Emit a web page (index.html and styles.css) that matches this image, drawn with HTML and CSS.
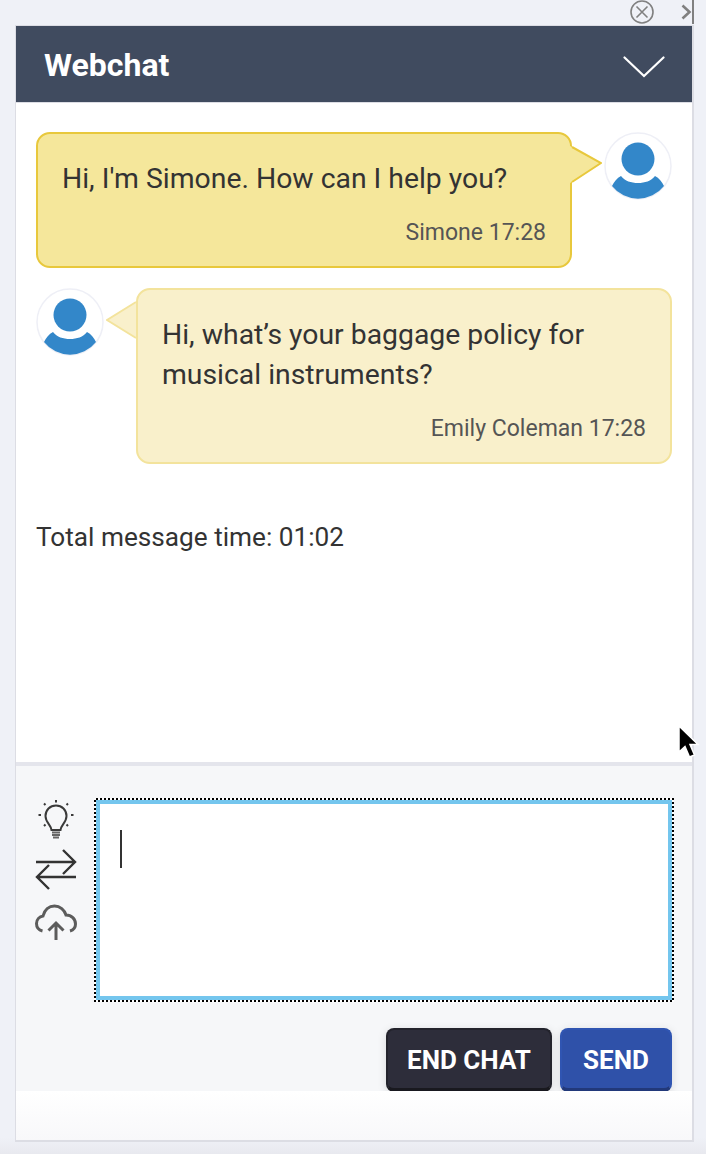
FILE: index.html
```html
<!DOCTYPE html>
<html lang="en">
<head>
    <meta charset="UTF-8">
    <title>Webchat</title>
    <link rel="stylesheet" href="styles.css">
</head>
<body>

    <div class="topbar">
        <svg class="close-icon" width="24" height="24" viewBox="0 0 24 24" fill="none" stroke="#808080" stroke-width="1.6">
            <circle cx="12" cy="12" r="11"/>
            <path d="M6.500 6.500 17.500 17.500M17.500 6.500 6.500 17.500"/>
        </svg>
        <svg class="more-icon" width="11" height="16" viewBox="0 0 11 16" fill="none" stroke="#808080" stroke-width="2.6">
            <path d="M1.500 1.500 8.500 8 1.500 14.500"/>
        </svg>
        <div class="topbar-edge"></div>
    </div>

    <div class="panel">
        <div class="header">
            <h2>Webchat</h2>
            <svg width="42" height="22" viewBox="0 0 42 22" fill="none" stroke="#fff" stroke-width="2.2" stroke-linecap="round">
                <path d="M1.500 1.500 21 20 40.500 1.500"/>
            </svg>
        </div>

        <div class="messages">
            <div class="msg msg-agent">
                <div class="bubble">
                    <p>Hi, I'm Simone. How can I help you?</p>
                    <div class="meta">Simone 17:28</div>
                </div>
                <svg class="tail" width="32" height="56" viewBox="0 0 32 56">
                    <path d="M0 14 31 31 0 51Z" fill="#f5e79b"/>
                    <path d="M2 15 31 31 2 50" fill="none" stroke="#e8c83c" stroke-width="2"/>
                </svg>
                <svg class="avatar" width="68" height="68" viewBox="0 0 68 68">
                    <circle cx="34" cy="34" r="33" fill="#fff" stroke="#eeeff6" stroke-width="1.500"/>
                    <g class="avatar-figure">
                        <circle cx="34" cy="27" r="16.500" fill="#3387c9"/>
                        <path d="M17 44C21 49 27 51 34 51 41 51 47 49 51 44 55 46 58 50 60 54A33 33 0 0 1 8 54C10 50 13 46 17 44Z" fill="#3387c9"/>
                    </g>
                </svg>
            </div>

            <div class="msg msg-user">
                <svg class="avatar" width="68" height="68" viewBox="0 0 68 68">
                    <circle cx="34" cy="34" r="33" fill="#fff" stroke="#eeeff6" stroke-width="1.500"/>
                    <g class="avatar-figure">
                        <circle cx="34" cy="27" r="16.500" fill="#3387c9"/>
                        <path d="M17 44C21 49 27 51 34 51 41 51 47 49 51 44 55 46 58 50 60 54A33 33 0 0 1 8 54C10 50 13 46 17 44Z" fill="#3387c9"/>
                    </g>
                </svg>
                <svg class="tail" width="32" height="56" viewBox="0 0 32 56">
                    <path d="M32 13 1 32 32 51Z" fill="#f9f0cb"/>
                    <path d="M30 14 1 32 30 50" fill="none" stroke="#f3e39c" stroke-width="2"/>
                </svg>
                <div class="bubble">
                    <p>Hi, what’s your baggage policy for musical instruments?</p>
                    <div class="meta">Emily Coleman 17:28</div>
                </div>
            </div>

            <div class="total">Total message time: 01:02</div>
        </div>

        <div class="composer">
            <div class="composer-row">
                <div class="tools">
                    <svg class="tool-bulb" width="40" height="44" viewBox="0 0 40 44" fill="none" stroke="#3a3a3a" stroke-width="2">
                        <path d="M15.500 32C15 27 9.500 24.500 9.500 18 9.500 12 14 7.500 20 7.500 26 7.500 30.500 12 30.500 18 30.500 24.500 25 27 24.500 32Z"/>
                        <path d="M16 34.500H24M16 37H24M17 39.500H23" stroke="#666" stroke-width="2"/>
                        <path d="M20 2V4.500M8 5.500 9.500 7M32 5.500 30.500 7M2.500 17H5M35 17H37.500M8 28 9.500 26.500M32 28 30.500 26.500" stroke-width="2"/>
                    </svg>
                    <svg class="tool-swap" width="42" height="43" viewBox="0 0 42 43" fill="none" stroke="#333" stroke-width="2.400">
                        <path d="M1 14H40M28 2 40 14 28 26"/>
                        <path d="M41 29H2M14 17 2 29 14 41"/>
                    </svg>
                    <svg class="tool-upload" width="42" height="36" viewBox="0 0 42 36" fill="none" stroke="#5c5c5c" stroke-width="3">
                        <path d="M7.500 27C3.500 26 1.500 23 1.500 19.500 1.500 15.500 4.500 12.500 8 12 9.500 6 14 2 19.500 2 25 2 29.500 6 31 11 36.500 11 40.500 15 40.500 20 40.500 23.500 38.500 26 35 27"/>
                        <path d="M21 36V19M13.500 26.500 21 19 28.500 26.500"/>
                    </svg>
                </div>
                <div class="input-focus">
                    <div class="input-box"><span class="caret"></span></div>
                </div>
            </div>
            <div class="actions">
                <button class="btn btn-end">END CHAT</button>
                <button class="btn btn-send">SEND</button>
            </div>
        </div>
        <div class="panel-bottom"></div>
    </div>

    <svg class="pointer" width="24" height="36" viewBox="0 0 24 36">
        <path d="M2 1V27L8 21.500 12.500 32 17.500 30 13 19.500H21Z" fill="#000" stroke="#fff" stroke-width="1.500"/>
    </svg>

</body>
</html>
```

FILE: styles.css
```css
html, body { margin: 0; padding: 0; }
body { width: 706px; height: 1154px; overflow: hidden; background: linear-gradient(#eff1f7 1138px, #e8e9ef); font-family: Roboto, sans-serif; color: #333; position: relative; }

.topbar { height: 25px; width: 679px; margin-left: 15px; display: flex; justify-content: flex-end; align-items: flex-start; }
.close-icon { margin-right: 27px; }
.more-icon { margin-top: 4px; }
.topbar-edge { width: 2px; height: 24px; background: #808080; }

.panel { width: 676px; height: 1114px; margin-left: 15px; border: 1px solid #dcdde4; border-width: 1px 2px 2px 1px; background: #fff; display: flex; flex-direction: column; }

.header { height: 76px; flex: none; background: #404b5f; border-bottom: 1px solid #dcdde4; display: flex; align-items: center; justify-content: space-between; padding: 0 27px 0 28px; }
.header h2 { margin: 2px 0 0; color: #fff; font-size: 32px; font-weight: 700; }
.header svg { margin-top: 6px; }

.messages { height: 663px; flex: none; box-sizing: border-box; padding: 29px 20px 0; border-bottom: 4px solid #e4e5ec; }
.msg { display: flex; align-items: flex-start; margin-bottom: 20px; }
.bubble { width: 536px; flex: none; box-sizing: border-box; border-radius: 14px; padding: 25px 24px 17px; font-size: 28.35px; line-height: 40px; }
.bubble p { margin: 0; }
.meta { text-align: right; font-size: 23px; line-height: 32px; color: #555; margin-top: 18px; }
.msg-agent .bubble { background: #f5e79b; border: 2px solid #e8c83c; }
.msg-user .bubble { background: #f9f0cb; border: 2px solid #f3e39c; }
.tail { flex: none; }
.msg-agent .tail { margin-left: -2px; }
.msg-agent .avatar { margin-left: 2px; }
.msg-user .tail { margin-left: 2px; margin-right: -2px; }
.avatar { flex: none; }
.avatar-figure { filter: blur(.6px); }
.total { margin-top: 53px; font-size: 26.2px; line-height: 40px; }

.composer { height: 325px; flex: none; box-sizing: border-box; background: #f6f7f9; padding: 32px 20px 0; }
.composer-row { display: flex; align-items: flex-start; }
.tools { width: 40px; margin-right: 18px; display: flex; flex-direction: column; align-items: center; }
.tool-swap { margin-top: 6px; }
.tool-upload { margin-top: 13px; }
.input-focus { width: 580px; height: 204px; flex: none; box-sizing: border-box; padding: 2px; margin-right: -2px; background: repeating-conic-gradient(#000 0 25%, #fff 0 50%) 0 0 / 4px 4px; }
.input-box { height: 200px; box-sizing: border-box; border: 4px solid #74c6ee; background: #fff; padding: 26px 20px; }
.caret { display: block; width: 2px; height: 38px; background: #333; }

.actions { display: flex; justify-content: flex-end; gap: 8px; margin-top: 26px; }
.btn { height: 64px; border-radius: 8px; font-family: Roboto, sans-serif; font-size: 26px; font-weight: 700; color: #fff; padding: 2px 0 0; box-shadow: 0 2px 10px rgba(0, 0, 0, .12); }
.btn-end { width: 166px; background: #2d2d3a; border: 2px solid #23232c; border-bottom: 4px solid #19191f; }
.btn-send { width: 112px; background: #2f51a9; border: 2px solid #3055b2; border-bottom: 4px solid #22397a; }

.panel-bottom { flex: 1; background: linear-gradient(#fff, #f8f8fa); }

.pointer { position: absolute; left: 677px; top: 725px; }
```
